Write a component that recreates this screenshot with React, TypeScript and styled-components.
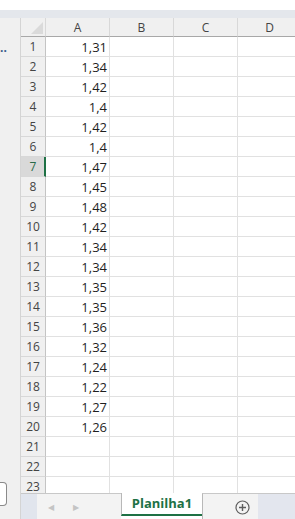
import React from 'react';
import styled, { createGlobalStyle } from 'styled-components';

const GlobalStyle = createGlobalStyle`
  html, body {
    margin: 0;
    padding: 0;
    background: #fff;
  }
  body {
    font-family: 'Open Sans', 'Liberation Sans', sans-serif;
  }
`;

const values = [
  '1,31', '1,34', '1,42', '1,4', '1,42', '1,4', '1,47', '1,45', '1,48', '1,42',
  '1,34', '1,34', '1,35', '1,35', '1,36', '1,32', '1,24', '1,22', '1,27', '1,26',
];

const columns = ['A', 'B', 'C', 'D'];
const ROWS = 23;
const SELECTED_ROW = 7;

const App = () => {
  return (
    <>
      <GlobalStyle />
      <Window>
        <TopStrip />
        <Band />
        <Main>
          <SidePane>
            <Ellipsis>..</Ellipsis>
            <SideBox />
          </SidePane>
          <Workspace>
            <Sheet>
              <Corner>
                <svg width="12" height="12" viewBox="0 0 12 12">
                  <polygon points="12,0 12,12 0,12" fill="#dadada" />
                </svg>
              </Corner>
              {columns.map((c) => (
                <ColHeader key={c}>{c}</ColHeader>
              ))}
              {Array.from({ length: ROWS }, (_, i) => {
                const row = i + 1;
                return (
                  <React.Fragment key={row}>
                    <RowHeader $selected={row === SELECTED_ROW}>{row}</RowHeader>
                    {columns.map((c) => (
                      <Cell key={c}>{c === 'A' ? values[i] ?? '' : ''}</Cell>
                    ))}
                  </React.Fragment>
                );
              })}
            </Sheet>
            <TabBar>
              <TabCorner />
              <NavArea>
                <NavArrow>◀</NavArrow>
                <NavArrow>▶</NavArrow>
              </NavArea>
              <SheetTab>Planilha1</SheetTab>
              <AddArea>
                <svg width="15" height="15" viewBox="0 0 15 15">
                  <circle cx="7.5" cy="7.5" r="6.5" fill="none" stroke="#5f5f5f" strokeWidth="1.2" />
                  <path d="M7.5 4v7M4 7.5h7" stroke="#5f5f5f" strokeWidth="1.4" />
                </svg>
              </AddArea>
              <TabRest />
            </TabBar>
          </Workspace>
        </Main>
      </Window>
    </>
  );
};

export default App;

const Window = styled.div`
  display: flex;
  flex-direction: column;
  width: 295px;
  height: 519px;
  overflow: hidden;
  background: #fff;
`;

const TopStrip = styled.div`
  height: 10px;
  background: #fff;
`;

const Band = styled.div`
  height: 8px;
  background: #e4e7ec;
`;

const Main = styled.div`
  display: flex;
  flex: 1;
  min-height: 0;
`;

const SidePane = styled.div`
  display: flex;
  flex-direction: column;
  width: 20px;
  flex-shrink: 0;
  background: #f0f0f0;
  border-right: 1px solid #d4d4d4;
`;

const Ellipsis = styled.span`
  margin-top: 22px;
  font-size: 12px;
  font-weight: 700;
  line-height: 16px;
  color: #3a5a8a;
  letter-spacing: 0;
`;

const SideBox = styled.div`
  margin-top: auto;
  margin-bottom: 13px;
  width: 6px;
  height: 22px;
  background: #fff;
  border: 1px solid #8a8a8a;
  border-left: none;
  border-radius: 0 4px 4px 0;
`;

const Workspace = styled.div`
  display: flex;
  flex-direction: column;
  flex: 1;
  min-width: 0;
`;

const Sheet = styled.div`
  display: grid;
  grid-template-columns: 25px repeat(4, 64px);
  grid-auto-rows: 20px;
  grid-template-rows: 19px;
  height: 475px;
  overflow: hidden;
  font-size: 12px;
`;

const Corner = styled.div`
  display: flex;
  align-items: flex-end;
  justify-content: flex-end;
  padding: 0 2px 2px 0;
  background: #f0f0f0;
  border-right: 1px solid #d8d8d8;
  border-bottom: 1px solid #a8a8a8;
`;

const ColHeader = styled.div`
  display: flex;
  align-items: center;
  justify-content: center;
  background: #f0f0f0;
  color: #444;
  border-right: 1px solid #d8d8d8;
  border-bottom: 1px solid #a8a8a8;
  font-size: 12px;
`;

const RowHeader = styled.div<{ $selected?: boolean }>`
  display: flex;
  align-items: center;
  justify-content: center;
  background: ${(p) => (p.$selected ? '#d9d9d9' : '#f0f0f0')};
  color: ${(p) => (p.$selected ? '#2a6b48' : '#444')};
  border-bottom: 1px solid #d8d8d8;
  border-right: ${(p) => (p.$selected ? '2px solid #1e7145' : '1px solid #c4c4c4')};
  font-size: 12px;
  padding-left: ${(p) => (p.$selected ? '1px' : '0')};
`;

const Cell = styled.div`
  display: flex;
  align-items: center;
  justify-content: flex-end;
  padding-right: 2px;
  border-right: 1px solid #e1e1e1;
  border-bottom: 1px solid #e1e1e1;
  color: #1f1f1f;
  font-size: 13px;
  font-family: 'Open Sans', 'Liberation Sans', sans-serif;
  white-space: nowrap;
`;

const TabBar = styled.div`
  display: flex;
  height: 26px;
  flex-shrink: 0;
`;

const TabCorner = styled.div`
  width: 16px;
  background: #e1e5ed;
  border-top: 1px solid #c8c8c8;
`;

const NavArea = styled.div`
  display: flex;
  align-items: center;
  gap: 19px;
  width: 84px;
  padding-left: 11px;
  box-sizing: border-box;
  background: #f3f3f3;
  border-top: 1px solid #c8c8c8;
`;

const NavArrow = styled.span`
  font-size: 8px;
  color: #c4c4c4;
`;

const SheetTab = styled.div`
  display: flex;
  align-items: center;
  justify-content: center;
  width: 81px;
  box-sizing: border-box;
  padding-bottom: 1px;
  background: #fff;
  border-left: 1px solid #b8b8b8;
  border-bottom: 2px solid #1e7145;
  margin-bottom: 3px;
  color: #1e7145;
  font-weight: 700;
  font-size: 13px;
`;

const AddArea = styled.div`
  display: flex;
  align-items: center;
  justify-content: flex-end;
  padding-right: 8px;
  padding-top: 1px;
  width: 56px;
  box-sizing: border-box;
  background: #f3f3f3;
  border-top: 1px solid #c8c8c8;
  border-left: 1px solid #b8b8b8;
`;

const TabRest = styled.div`
  flex: 1;
  background: #e3e6ee;
  border-top: 1px solid #c8c8c8;
`;
